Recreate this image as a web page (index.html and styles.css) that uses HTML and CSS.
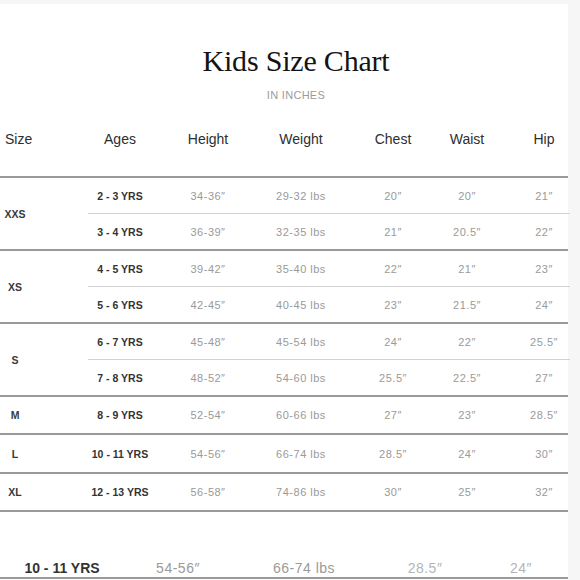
FILE: index.html
```html
<!DOCTYPE html>
<html>
<head>
<meta charset="utf-8">
<title>Kids Size Chart</title>
<link rel="stylesheet" href="styles.css">
</head>
<body>
<div class="page">
  <h1 class="title">Kids Size Chart</h1>
  <div class="subtitle">IN INCHES</div>

  <div class="thead">
    <div class="c-size">Size</div>
    <div>Ages</div>
    <div>Height</div>
    <div>Weight</div>
    <div>Chest</div>
    <div>Waist</div>
    <div class="c-hip">Hip</div>
  </div>

  <div class="group">
    <div class="size"><span>XXS</span></div>
    <div class="subs">
      <div class="row"><div class="age">2 - 3 YRS</div><div>34-36″</div><div>29-32 lbs</div><div>20″</div><div>20″</div><div class="c-hip">21″</div></div>
      <div class="row"><div class="age">3 - 4 YRS</div><div>36-39″</div><div>32-35 lbs</div><div>21″</div><div>20.5″</div><div class="c-hip">22″</div></div>
    </div>
  </div>

  <div class="group">
    <div class="size"><span>XS</span></div>
    <div class="subs">
      <div class="row"><div class="age">4 - 5 YRS</div><div>39-42″</div><div>35-40 lbs</div><div>22″</div><div>21″</div><div class="c-hip">23″</div></div>
      <div class="row"><div class="age">5 - 6 YRS</div><div>42-45″</div><div>40-45 lbs</div><div>23″</div><div>21.5″</div><div class="c-hip">24″</div></div>
    </div>
  </div>

  <div class="group">
    <div class="size"><span>S</span></div>
    <div class="subs">
      <div class="row"><div class="age">6 - 7 YRS</div><div>45-48″</div><div>45-54 lbs</div><div>24″</div><div>22″</div><div class="c-hip">25.5″</div></div>
      <div class="row"><div class="age">7 - 8 YRS</div><div>48-52″</div><div>54-60 lbs</div><div>25.5″</div><div>22.5″</div><div class="c-hip">27″</div></div>
    </div>
  </div>

  <div class="group">
    <div class="size"><span>M</span></div>
    <div class="subs">
      <div class="row single"><div class="age">8 - 9 YRS</div><div>52-54″</div><div>60-66 lbs</div><div>27″</div><div>23″</div><div class="c-hip">28.5″</div></div>
    </div>
  </div>

  <div class="group">
    <div class="size"><span>L</span></div>
    <div class="subs">
      <div class="row single tall"><div class="age">10 - 11 YRS</div><div>54-56″</div><div>66-74 lbs</div><div>28.5″</div><div>24″</div><div class="c-hip">30″</div></div>
    </div>
  </div>

  <div class="group">
    <div class="size"><span>XL</span></div>
    <div class="subs">
      <div class="row single"><div class="age">12 - 13 YRS</div><div>56-58″</div><div>74-86 lbs</div><div>30″</div><div>25″</div><div class="c-hip">32″</div></div>
    </div>
  </div>

  <div class="ghost">
    <div class="gcell age">10 - 11 YRS</div>
    <div class="gcell">54-56″</div>
    <div class="gcell">66-74 lbs</div>
    <div class="gcell faint">28.5″</div>
    <div class="gcell faint">24″</div>
  </div>
</div>
</body>
</html>
```

FILE: styles.css
```css
html, body {
  margin: 0;
  padding: 0;
}

body {
  background: #f6f6f6;
  font-family: "Liberation Sans", Arial, sans-serif;
}

.page {
  width: 568px;
  margin-top: 4px;
  min-height: 576px;
  background: #ffffff;
}

.title {
  margin: 0;
  padding: 39px 0 0 24px;
  font-family: "Liberation Serif", "Times New Roman", serif;
  font-weight: normal;
  font-size: 30px;
  line-height: 36px;
  letter-spacing: -0.2px;
  text-align: center;
  color: #141414;
}

.subtitle {
  margin-top: 10px;
  padding-left: 24px;
  font-size: 11px;
  line-height: 13px;
  letter-spacing: 0.3px;
  text-align: center;
  color: #9b9b9b;
}

.thead {
  display: grid;
  grid-template-columns: 88px 64px 112px 74px 110px 38px 84px;
  height: 74px;
  border-bottom: 2px solid #9a9a9a;
  font-size: 14px;
  color: #2e2e2e;
}

.thead > div {
  display: flex;
  align-items: center;
  justify-content: center;
  white-space: nowrap;
}

.thead .c-size {
  justify-content: flex-start;
  padding-left: 5px;
}

.thead .c-hip,
.row .c-hip {
  padding-left: 32px;
}

.group {
  display: flex;
  border-bottom: 2px solid #9a9a9a;
}

.size {
  flex: none;
  width: 88px;
  display: flex;
  align-items: center;
}

.size span {
  width: 30px;
  text-align: center;
  font-size: 10.5px;
  font-weight: bold;
  color: #3a3a3a;
}

.subs {
  flex: 1;
}

.row {
  display: grid;
  grid-template-columns: 64px 112px 74px 110px 38px 84px;
  height: 35px;
}

.row + .row {
  border-top: 1px solid #d2d2d2;
}

.row.single {
  height: 36px;
}

.row.single.tall {
  height: 37px;
}

.row > div {
  display: flex;
  align-items: center;
  justify-content: center;
  white-space: nowrap;
  font-size: 11px;
  letter-spacing: 0.5px;
  color: #9a9a9a;
}

.row > .age {
  font-size: 10.5px;
  font-weight: bold;
  letter-spacing: 0;
  color: #333333;
}

.ghost {
  display: grid;
  grid-template-columns: 124px 108px 144px 98px 94px;
  align-items: end;
  height: 63px;
  padding-bottom: 2px;
  border-bottom: 2px solid #9a9a9a;
}

.gcell {
  display: flex;
  justify-content: center;
  white-space: nowrap;
  font-size: 14px;
  line-height: 14px;
  letter-spacing: 0.5px;
  color: #9a9a9a;
}

.gcell.age {
  font-weight: bold;
  letter-spacing: 0;
  color: #333333;
}

.gcell.faint {
  color: #b4b4b4;
}
```
